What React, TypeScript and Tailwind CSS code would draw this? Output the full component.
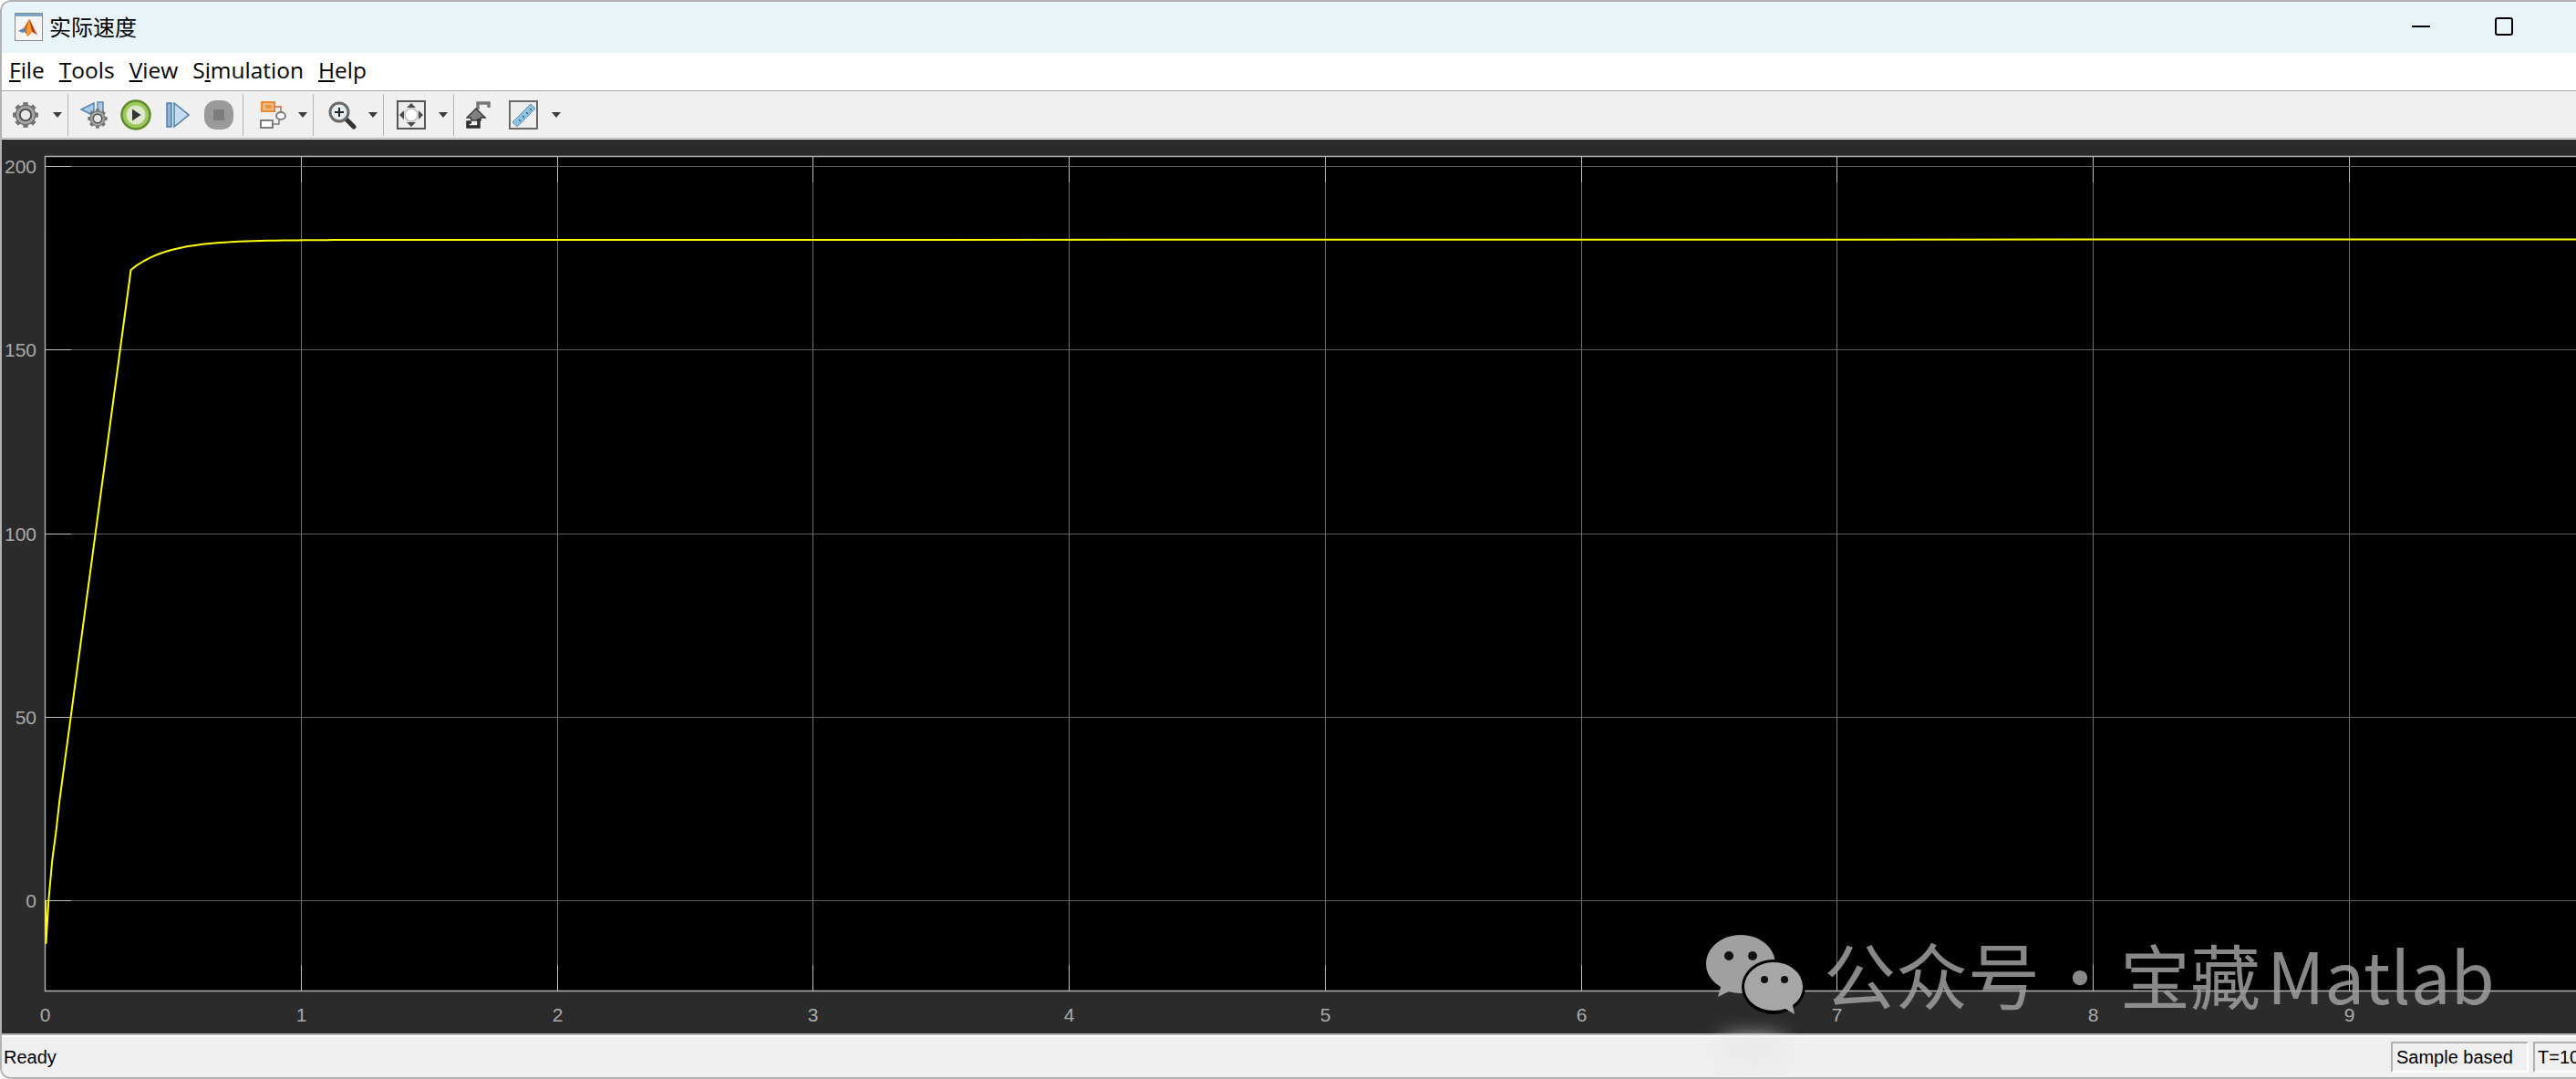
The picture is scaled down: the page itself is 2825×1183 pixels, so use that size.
const SANS = '"Liberation Sans", Arial, sans-serif';
const CJK = '"Noto Sans CJK SC", "Noto Sans", sans-serif';

const xTicks = [0, 1, 2, 3, 4, 5, 6, 7, 8, 9].map((n) => ({ n, x: Math.floor(49.5 + n * 280.75) + 0.5 }));
const yTicks = [200, 150, 100, 50, 0].map((n) => ({ n, y: Math.floor(987.5 - n * 4.025) + 0.5 }));

// curve: thin start, straight ramp, then exponential settle
function curvePath() {
  const pts: [number, number][] = [
    [50, 987],
    [50.5, 1034],
    [53.3, 987],
    [57.3, 943],
    [61.7, 910],
    [65, 880],
    [143.5, 296],
  ];
  for (let x = 150; x < 500; x += 8) {
    pts.push([x, 263 + 32.7 * Math.exp(-(x - 143.5) / 41)]);
  }
  pts.push([2825, 262.5]);
  return pts.map(([x, y], i) => `${i ? "L" : "M"}${x} ${y.toFixed(1)}`).join(" ");
}

function Arrow({ className }: { className: string }) {
  return (
    <svg width="10" height="6" viewBox="0 0 10 6" className={className}>
      <path d="M0 0h10L5 6z" fill="#3c3c3c" />
    </svg>
  );
}

function Sep({ className }: { className: string }) {
  return <div className={`h-[46px] w-px bg-[#b4b4b4] ${className}`} />;
}

function GearShape({ cx, cy, r }: { cx: number; cy: number; r: number }) {
  const teeth = [0, 45, 90, 135, 180, 225, 270, 315];
  return (
    <g>
      {teeth.map((a) => (
        <rect
          key={a}
          x={cx - r * 0.2}
          y={cy - r * 1.1}
          width={r * 0.4}
          height={r * 2.2}
          fill="#777"
          transform={`rotate(${a} ${cx} ${cy})`}
        />
      ))}
      <circle cx={cx} cy={cy} r={r * 0.86} fill="#a6a6a6" stroke="#6a6a6a" strokeWidth={r * 0.1} />
      <circle cx={cx} cy={cy} r={r * 0.5} fill="#e8e8e8" stroke="#555" strokeWidth={r * 0.17} />
    </g>
  );
}

function MatlabLogo() {
  return (
    <svg width="31" height="31" viewBox="0 0 31 31" className="ml-[14px] mr-[7px]">
      <rect x="0.5" y="0.5" width="30" height="30" fill="#f4f4f4" stroke="#8a8a8a" />
      <rect x="1" y="1" width="29" height="3" fill="#7ca6cc" />
      <path d="M4 20l6-3 6-10c2 2 5 12 9 17-3-1-4-3-6-3-2 2-3 4-5 5-1-4-3-6-10-6z" fill="#d9601f" />
      <path d="M4 20l6-3 3 2-4 3z" fill="#4d8cc0" />
      <path d="M16 7c2 2 5 12 9 17-3-1-4-3-6-3-1-5-2-10-3-14z" fill="#c23a16" />
      <path d="M13 19l3-12 3 14-5 5c0-2-1-5-1-7z" fill="#f0a030" />
    </svg>
  );
}

function WeChatMark() {
  return (
    <svg width="112" height="92" viewBox="0 0 112 92" className="mt-[6px]">
      <path d="M40 2c21 0 38 14 38 32S61 66 40 66c-5 0-9-1-13-2L15 70l3-11C8 53 2 44 2 34 2 16 19 2 40 2z" fill="#a0a0a0" />
      <ellipse cx="76" cy="59" rx="35" ry="30" fill="#000" />
      <path d="M76 32c18 0 32 12 32 27 0 8-4 15-11 20l2 10-10-6c-4 1-8 2-13 2-18 0-32-12-32-26s14-27 32-27z" fill="#a6a6a6" />
      <circle cx="27" cy="25" r="5" fill="#111" />
      <circle cx="53" cy="25" r="5" fill="#111" />
      <circle cx="66" cy="51" r="4" fill="#111" />
      <circle cx="88" cy="51" r="4" fill="#111" />
    </svg>
  );
}

function Toolbar() {
  return (
    <div className="flex h-[51px] items-center bg-[#f0f0f0]">
      <svg width="30" height="30" viewBox="0 0 30 30" className="ml-[11px]">
        <GearShape cx={15} cy={15} r={12.5} />
      </svg>
      <Arrow className="ml-[15px]" />
      <Sep className="ml-[6px]" />
      <svg width="32" height="32" viewBox="0 0 32 32" className="ml-[12px]">
        <path d="M16 3v14L2 10z" fill="#a9c8e4" stroke="#5b88b2" strokeWidth="1.5" />
        <rect x="20" y="2" width="6" height="13" fill="#a9c8e4" stroke="#5b88b2" strokeWidth="1.5" />
        <GearShape cx={20} cy={20} r={9.5} />
      </svg>
      <svg width="34" height="34" viewBox="0 0 34 34" className="ml-[13px]">
        <circle cx="17" cy="17" r="15.5" fill="#9cc95a" stroke="#5d8a2c" strokeWidth="2.5" />
        <circle cx="17" cy="17" r="10.5" fill="#dfe8cf" />
        <path d="M13 10.5l9.5 6.5-9.5 6.5z" fill="#333" />
      </svg>
      <svg width="26" height="32" viewBox="0 0 26 32" className="ml-[16px]">
        <rect x="1" y="3" width="5" height="26" fill="#8fb4d8" stroke="#4f7ca8" strokeWidth="1.5" />
        <path d="M9 3l16 13L9 29z" fill="#c5dcf0" stroke="#4f7ca8" strokeWidth="1.5" />
      </svg>
      <svg width="34" height="34" viewBox="0 0 34 34" className="ml-[15px]">
        <rect x="1" y="1" width="32" height="32" rx="13" fill="#9a9a9a" />
        <rect x="11" y="11" width="12" height="12" fill="#7c7c7c" />
      </svg>
      <Sep className="ml-[9px]" />
      <svg width="32" height="32" viewBox="0 0 32 32" className="ml-[16px]">
        <rect x="4" y="2" width="14" height="10" fill="#f4b878" stroke="#e88a3a" strokeWidth="2" />
        <rect x="8" y="5" width="7" height="4" fill="#e89540" />
        <path d="M18 7h7v6" fill="none" stroke="#d0603a" strokeWidth="1.5" />
        <ellipse cx="25" cy="17" rx="5" ry="4" fill="#fff" stroke="#7c7c7c" strokeWidth="2" />
        <rect x="3" y="22" width="13" height="8" fill="#fff" stroke="#7c7c7c" strokeWidth="2" />
        <path d="M16 26h7v-5" fill="none" stroke="#7c7c7c" strokeWidth="1.5" />
      </svg>
      <Arrow className="ml-[12px]" />
      <Sep className="ml-[6px]" />
      <svg width="32" height="32" viewBox="0 0 32 32" className="ml-[15px]">
        <path d="M20 20l9 9" stroke="#333" strokeWidth="5" strokeLinecap="round" />
        <circle cx="13" cy="13" r="10" fill="#e6edf3" stroke="#6a6a6a" strokeWidth="3" />
        <path d="M8 13h10M13 8v10" stroke="#222" strokeWidth="2" />
      </svg>
      <Arrow className="ml-[13px]" />
      <Sep className="ml-[6px]" />
      <svg width="32" height="32" viewBox="0 0 32 32" className="ml-[14px]">
        <rect x="1" y="1" width="30" height="30" fill="#ececec" stroke="#555" strokeWidth="2" />
        <circle cx="16" cy="16" r="7" fill="#fff" stroke="#bbb" strokeWidth="1.5" />
        <path d="M16 3l5 5H11zM16 29l5-5H11zM3 16l5-5v10zM29 16l-5-5v10z" fill="#4c4c4c" />
      </svg>
      <Arrow className="ml-[14px]" />
      <Sep className="ml-[6px]" />
      <svg width="27" height="32" viewBox="0 0 27 32" className="ml-[13px]">
        <path d="M13 10V3h12v5" fill="none" stroke="#777" strokeWidth="3.5" />
        <path d="M5 19H1l10-10 10 10h-5v3H6z" fill="#808080" stroke="#3a3a3a" strokeWidth="1.5" />
        <path d="M14 20v9H2v-5h4" fill="none" stroke="#2e2e2e" strokeWidth="3.5" />
      </svg>
      <svg width="32" height="32" viewBox="0 0 32 32" className="ml-[20px]">
        <rect x="1" y="1" width="30" height="30" fill="#eeeeee" stroke="#6a6a6a" strokeWidth="2" />
        <path d="M4 24L24 4l5 5L9 29z" fill="#8fc4e4" stroke="#5d93b3" strokeWidth="1" />
        <path d="M11 21l2 2M15 17l2 2M19 13l2 2M23 9l2 2" stroke="#3c6c88" strokeWidth="1.5" />
      </svg>
      <Arrow className="ml-[15px]" />
    </div>
  );
}

function Plot() {
  return (
    <svg width="2823" height="980" viewBox="2 153 2823 980" className="block">
      <rect x="2" y="153" width="2823" height="980" fill="#2b2b2b" />
      <rect x="49" y="171" width="2776" height="915" fill="#000" />
      {xTicks.slice(1).map((t) => (
        <g key={t.n}>
          <path d={`M${t.x} 172V1086`} stroke="#707070" strokeWidth="1" />
          <path d={`M${t.x} 172v28M${t.x} 1058v28`} stroke="#c0c0c0" strokeWidth="1" />
        </g>
      ))}
      {yTicks.map((t) => (
        <g key={t.n}>
          <path d={`M49 ${t.y}H2825`} stroke="#606060" strokeWidth="1" />
          <path d={`M49 ${t.y}h29`} stroke="#c0c0c0" strokeWidth="1" />
        </g>
      ))}
      <path d="M2825 171.5H49.5V1086.5H2825" fill="none" stroke="#b4b4b4" strokeWidth="1.4" />
      <path d={curvePath()} fill="none" stroke="#ffff00" strokeWidth="2" strokeLinejoin="round" />
      <g fill="#aaaaaa" fontSize="21" fontFamily={SANS}>
        {yTicks.map((t) => (
          <text key={t.n} x="40" y={t.y + 7.5} textAnchor="end">
            {t.n}
          </text>
        ))}
        {xTicks.map((t) => (
          <text key={t.n} x={t.x} y="1120" textAnchor="middle">
            {t.n}
          </text>
        ))}
      </g>
    </svg>
  );
}

export default function App() {
  return (
    <div
      className="relative flex h-[1183px] w-[2825px] flex-col overflow-hidden rounded-l-[12px] border-y-2 border-l-2 border-[#b2b2b2] bg-white text-black"
      style={{ fontFamily: SANS }}
    >
      <div className="absolute left-[1478px] top-[-2px] h-[2px] w-[52px] bg-[#c8492e]" />

      {/* title bar */}
      <div className="flex h-[56px] items-center bg-[#e9f4f8] pb-[2px]">
        <MatlabLogo />
        <span className="text-[24px] leading-none" style={{ fontFamily: CJK }}>
          实际速度
        </span>
        <div className="ml-auto mr-[69px] flex items-center gap-[71px]">
          <div className="h-[2px] w-[20px] bg-black" />
          <div className="h-[20px] w-[20px] rounded-[3px] border-2 border-black" />
        </div>
      </div>

      {/* menu */}
      <div
        className="flex h-[41px] items-center gap-[16px] pb-[2px] pl-[8px] text-[24.5px] leading-none"
        style={{ fontFamily: '"Open Sans", sans-serif' }}
      >
        <span><u>F</u>ile</span>
        <span><u>T</u>ools</span>
        <span><u>V</u>iew</span>
        <span>S<u>i</u>mulation</span>
        <span><u>H</u>elp</span>
      </div>

      <div className="h-px bg-[#a8a8a8]" />
      <Toolbar />
      <div className="h-px bg-[#a8a8a8]" />
      <div className="h-px bg-white" />

      <Plot />

      {/* status bar */}
      <div className="h-[2px] bg-[#b0b0b0]" />
      <div className="h-[2px] bg-white" />
      <div className="flex flex-1 items-center bg-[#f0f0f0] text-[20px] leading-none">
        <span className="pl-[2px]">Ready</span>
        <div className="ml-auto flex h-[34px] w-[151px] items-center border-y-2 border-l-2 border-r-2 border-b-white border-l-[#b0b0b0] border-r-white border-t-[#b0b0b0] pl-[4px]">
          Sample based
        </div>
        <div className="ml-[5px] flex h-[34px] w-[47px] items-center overflow-hidden whitespace-nowrap border-b-2 border-l-2 border-t-2 border-b-white border-l-[#b0b0b0] border-t-[#b0b0b0] pl-[3px]">
          T=10.000
        </div>
      </div>

      {/* watermark, plus the faint smudge it leaves on the status bar */}
      <div className="absolute left-[1885px] top-[1137px] h-[28px] w-[70px] rounded-full bg-[#e8e8e8] blur-md" />
      <div className="absolute left-[1867px] top-[1015px] flex items-center">
        <WeChatMark />
        <div
          className="ml-[19px] flex items-baseline whitespace-nowrap leading-none text-[#a0a0a0]/85"
          style={{ fontFamily: CJK }}
        >
          <span className="text-[79px]">公众号</span>
          <span className="w-[88px] text-center text-[76px]">·</span>
          <span className="text-[77px]">宝藏</span>
          <span className="ml-[7px] text-[78px]">Matlab</span>
        </div>
      </div>
    </div>
  );
}
